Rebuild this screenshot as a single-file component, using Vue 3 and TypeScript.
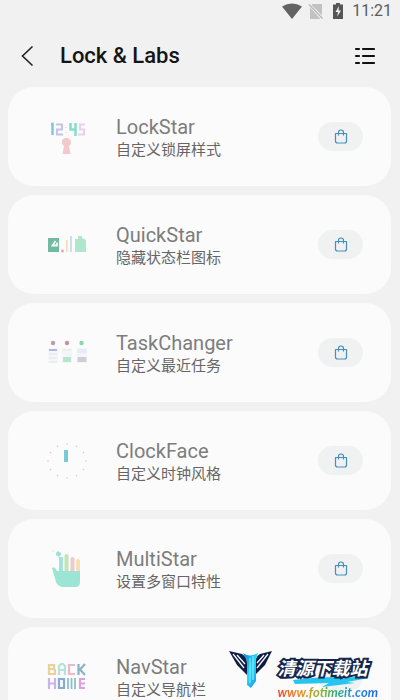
<script setup lang="ts">
interface LabItem {
  id: string
  name: string
  summary: string
}

const items: LabItem[] = [
  { id: 'lock', name: 'LockStar', summary: '自定义锁屏样式' },
  { id: 'quick', name: 'QuickStar', summary: '隐藏状态栏图标' },
  { id: 'task', name: 'TaskChanger', summary: '自定义最近任务' },
  { id: 'clock', name: 'ClockFace', summary: '自定义时钟风格' },
  { id: 'multi', name: 'MultiStar', summary: '设置多窗口特性' },
  { id: 'nav', name: 'NavStar', summary: '自定义导航栏' },
]

const ticks = Array.from({ length: 12 }, (_, i) => {
  const a = (i * Math.PI) / 6
  return { x: 24 + 19 * Math.sin(a), y: 24 - 17 * Math.cos(a) }
})
</script>

<template>
  <div class="screen">
    <div class="status">
      <svg class="wifi" viewBox="0 0 20 16" aria-hidden="true">
        <path d="M0 3.5Q10-2.5 20 3.5L10 16Z" fill="#626262" />
      </svg>
      <svg class="sim" viewBox="0 0 16 16" aria-hidden="true">
        <path d="M4 1h10v11.500L3.500 2ZM2 4.500 12.500 16H2Z" fill="#c2c2c2" />
        <path d="M1 1.500 14.500 15.500" stroke="#b8b8b8" stroke-width="1.300" />
      </svg>
      <svg class="battery" viewBox="0 0 12 16" aria-hidden="true">
        <path d="M4 0h4v1.500h3V16H1V1.500h3Z" fill="#555" />
        <path d="M7 3 3.500 9H6l-.8 4.500L9 7.500H6.500Z" fill="#f2f2f2" />
      </svg>
      <span class="time">11:21</span>
    </div>

    <header class="bar">
      <button class="icon-btn" type="button" aria-label="Back">
        <svg class="back" viewBox="0 0 14 22" aria-hidden="true">
          <path d="M12.500 1.500 2.500 11l10 9.500" fill="none" stroke="#222" stroke-width="1.600" />
        </svg>
      </button>
      <h1>Lock &amp; Labs</h1>
      <button class="icon-btn" type="button" aria-label="List">
        <svg class="menu" viewBox="0 0 22 20" aria-hidden="true">
          <path
            d="M2 3h3M9 3h11M2 10h3M9 10h11M2 17h3M9 17h11"
            stroke="#111"
            stroke-width="2.200"
            stroke-linecap="round"
          />
        </svg>
      </button>
    </header>

    <main class="list">
      <article v-for="item in items" :key="item.id" class="card">
        <svg class="art" viewBox="0 0 48 48" aria-hidden="true">
          <g v-if="item.id === 'lock'" fill="none" stroke-width="2">
            <path d="M8 11h1.500v11" stroke="#84c3e6" stroke-width="2.500" />
            <path d="M13 11.500h6v5h-5v5h6" stroke="#c6c3e6" />
            <path d="M23 14v1M23 19v1" stroke="#e5e9e8" />
            <path d="M27.500 10v6.500H32M32.500 10v13" stroke="#87dec7" stroke-width="2.500" />
            <path d="M42 11.500h-5v5h4v5h-6" stroke="#ecd0e8" />
            <path d="M19 30a4.500 4.500 0 1 1 7 3l1.500 8h-8l1.500-8q-2-1-2-3Z" fill="#f5c9cc" stroke="none" />
          </g>
          <g v-else-if="item.id === 'quick'">
            <path d="M5 17h11v14H5Z" fill="#72b9a1" />
            <path d="m12.500 20-3 4.500h4.500v-3" fill="none" stroke="#f1faf7" stroke-width="1.800" />
            <circle cx="19.500" cy="30" r="1.400" fill="#e7a6ac" />
            <path d="M23 19h1.700v12H23Z" fill="#f0ddbd" />
            <path d="M27 15h2v16h-2Z" fill="#c9def1" />
            <path d="M32 18h3v-3h4v2l4 2v12H32Z" fill="#afe6cc" />
          </g>
          <g v-else-if="item.id === 'task'">
            <circle cx="10" cy="14" r="2.200" fill="#c098b0" />
            <circle cx="24" cy="14" r="2.200" fill="#c88fa5" />
            <circle cx="38.500" cy="14" r="2.200" fill="#83d9af" />
            <path d="M5 19h10v15H5ZM19 19h10v15H19ZM34 19h10v15H34Z" fill="#f4f5f9" />
            <path d="M6 20h8v2H6Z" fill="#aeb8e1" />
            <path d="M6 25h8M6 29h8M6 33h8" stroke="#e2e5ee" />
            <path d="M20 21h8" stroke="#ebe2df" />
            <path d="M20 28h8v5h-8Z" fill="#b7e6d0" />
            <path d="M34.500 20h9v4h-9Z" fill="#e6ebf8" />
            <path d="M34.500 28h9v5h-9Z" fill="#d0ccd8" />
          </g>
          <g v-else-if="item.id === 'clock'">
            <circle v-for="(t, i) in ticks" :key="i" :cx="t.x" :cy="t.y" r="0.800" fill="#c2ccd2" />
            <path d="M21 13h4v12h-4Z" fill="#78cadb" />
          </g>
          <g v-else-if="item.id === 'multi'">
            <path d="M18 12v15" stroke="#a6e2d7" stroke-width="4" />
            <path d="M23.500 26V11" stroke="#bee6b6" stroke-width="4" stroke-linecap="round" />
            <path d="M29.500 26V14" stroke="#f3c7ce" stroke-width="4" stroke-linecap="round" />
            <path d="M35 26V16" stroke="#f5e0b5" stroke-width="4" stroke-linecap="round" />
            <path
              d="M13 10V8l2-2 3 2v2l-2 2ZM9 23q3-2 5 3h23v11q0 5-5 5H19q-6-1-7-9Z"
              fill="#9ce4d4"
            />
            <circle cx="10" cy="6" r="0.700" fill="#b7e6d9" />
          </g>
          <g v-else fill="none" stroke-width="2.200">
            <path d="M6 12h5v4l1 1v4H6ZM6 16h5" stroke="#ecd095" />
            <path d="M16 22V13l2-2h2l2 2v9M16 17h6" stroke="#b4e3dd" />
            <path d="M32 12h-6v9h6" stroke="#efb8ca" />
            <path d="M35.500 11v11M42 11l-5 5.500 5 5.500" stroke="#89b4c6" />
            <path d="M6 25v11M12 25v11M6 30.500h6" stroke="#c9b3e9" />
            <path d="M16 26h5v9h-5Z" stroke="#83abd4" />
            <path d="M25 25v11M28.500 25v11M32 25v11" stroke="#8dbecb" stroke-width="1.800" />
            <path d="M42 26h-5v9h5M37 30.500h5" stroke="#dda0e0" />
          </g>
        </svg>
        <div class="text">
          <h2>{{ item.name }}</h2>
          <p>{{ item.summary }}</p>
        </div>
        <button class="store" type="button" :aria-label="item.name">
          <svg class="bag" viewBox="0 0 14 16" aria-hidden="true">
            <path
              d="M1.500 4.500h11v7.500q0 2-2 2h-7q-2 0-2-2ZM4.500 6.500V3.500a2.500 2.500 0 0 1 5 0v3"
              fill="none"
              stroke="#468fbd"
              stroke-width="1.200"
              stroke-linejoin="round"
            />
          </svg>
        </button>
      </article>
    </main>

    <div class="mark">
      <svg class="wings" viewBox="0 0 44 40" aria-hidden="true">
        <defs>
          <linearGradient id="beam" x1="0" y1="0" x2="1" y2="1">
            <stop offset="0" stop-color="#087ddc" />
            <stop offset="0.500" stop-color="#29d8f5" />
            <stop offset="1" stop-color="#1689e8" />
          </linearGradient>
        </defs>
        <path d="M0 1 13 4q5 3 5 9v12L8 15Z" fill="#101c42" />
        <path d="M43 1 31 4q-5 3-5 9v12l10-10Z" fill="#101c42" />
        <path d="m4 4 11 14M8 5l8 9M39 4 28 18M35 5l-7 8" stroke="#f5faff" stroke-width="1.300" />
        <path d="M14 3q7 5 15 0l-2 7v21l-5 7-4-3V11Z" fill="url(#beam)" />
        <path d="M21 8v25M24 6v24" stroke="#8bf3ff" stroke-width="1" />
      </svg>
      <div class="mark-text">
        <svg class="swoosh" viewBox="0 0 90 14" aria-hidden="true">
          <path d="M12 6q35-5 76-2L66 8l8 1-33 4 7-4-34 1Z" fill="#25c5ef" />
        </svg>
        <strong>清源下载站</strong>
        <a href="#">www.fotimeit.com</a>
      </div>
    </div>
  </div>
</template>

<style>
body {
  margin: 0;
  background: #f1f1f1;
}
</style>

<style scoped>
.screen {
  position: relative;
  display: flex;
  flex-direction: column;
  height: 100vh;
  overflow: hidden;
  background: #f1f1f1;
  font-family: Roboto, 'Noto Sans CJK SC', sans-serif;
}

button {
  padding: 0;
  border: 0;
  background: none;
}

svg {
  display: block;
}

h1,
h2,
p {
  margin: 0;
  font-weight: 400;
}

.status {
  display: flex;
  flex: none;
  align-items: center;
  justify-content: flex-end;
  height: 22px;
  padding-right: 8px;
}

.wifi {
  width: 20px;
  height: 16px;
}

.sim {
  width: 16px;
  height: 16px;
  margin-left: 6px;
}

.battery {
  width: 12px;
  height: 16px;
  margin-left: 8px;
}

.time {
  margin-left: 8px;
  font-size: 16px;
  line-height: 20px;
  color: #5c5c5c;
}

.bar {
  display: flex;
  flex: none;
  align-items: center;
  box-sizing: border-box;
  height: 65px;
  padding: 2px 24px 0 16px;
}

.icon-btn {
  display: grid;
  flex: none;
  place-items: center;
  width: 22px;
  height: 32px;
}

.back {
  width: 14px;
  height: 22px;
}

.menu {
  width: 22px;
  height: 20px;
}

h1 {
  flex: 1;
  padding-left: 22px;
  font-size: 22px;
  line-height: 28px;
  font-weight: 500;
  color: #151515;
}

.list {
  display: flex;
  flex: 1;
  flex-direction: column;
  gap: 9px;
  min-height: 0;
  padding: 0 9px 0 8px;
  overflow-y: auto;
  scrollbar-width: none;
}

.card {
  display: flex;
  flex: none;
  align-items: center;
  box-sizing: border-box;
  height: 99px;
  padding: 0 28px 0 35px;
  border-radius: 26px;
  background: #fbfbfb;
}

.art {
  flex: none;
  width: 48px;
  height: 48px;
}

.text {
  flex: 1;
  padding: 3px 0 0 25px;
}

h2 {
  font-size: 20px;
  line-height: 24px;
  color: #7d7d7d;
}

p {
  font-size: 15px;
  line-height: 22px;
  color: #666;
}

.store {
  display: grid;
  flex: none;
  place-items: center;
  width: 45px;
  height: 29px;
  border-radius: 15px;
  background: #f0f1f1;
}

.bag {
  width: 14px;
  height: 16px;
}

.mark {
  position: absolute;
  right: 22px;
  bottom: 0;
  display: flex;
  align-items: flex-start;
}

.wings {
  width: 44px;
  height: 40px;
}

.mark-text {
  position: relative;
  display: flex;
  flex-direction: column;
}

.swoosh {
  position: absolute;
  top: 24px;
  left: 8px;
  width: 90px;
  height: 14px;
}

.mark-text strong {
  position: relative;
  padding-left: 4px;
  font-family: 'Noto Sans CJK SC', sans-serif;
  font-size: 18px;
  line-height: 34px;
  font-weight: 700;
  font-style: italic;
  color: #fff;
  -webkit-text-stroke: 4px #14264c;
  paint-order: stroke fill;
}

.mark-text a {
  position: relative;
  padding-left: 4px;
  font-family: Lato, 'Noto Sans', sans-serif;
  font-size: 13px;
  line-height: 16px;
  font-weight: 700;
  font-style: italic;
  text-decoration: none;
  color: transparent;
  background: linear-gradient(90deg, #e63a24, #ef8a22 25%, #8fb52d 45%, #28ac78 60%, #258be0 78%, #2467e0);
  background-clip: text;
}
</style>
